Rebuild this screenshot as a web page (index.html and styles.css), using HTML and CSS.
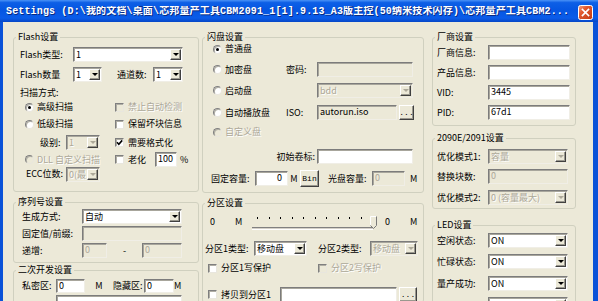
FILE: index.html
```html
<!DOCTYPE html>
<html lang="zh-CN">
<head>
<meta charset="utf-8">
<title>Settings</title>
<link rel="stylesheet" href="styles.css">
</head>
<body>
<div class="window">
  <div class="titlebar">
    <span class="title">Settings (D:\我的文档\桌面\芯邦量产工具CBM2091_1[1].9.13_A3版主控(50纳米技术闪存)\芯邦量产工具CBM2...</span>
    <svg class="close" width="15" height="15" viewBox="0 0 15 15">
      <defs>
        <linearGradient id="cg" x1="0" y1="0" x2="1" y2="1">
          <stop offset="0" stop-color="#f3a68a"/>
          <stop offset="0.35" stop-color="#e2592e"/>
          <stop offset="1" stop-color="#c13a12"/>
        </linearGradient>
      </defs>
      <rect x="0.5" y="0.5" width="14" height="14" rx="2" fill="url(#cg)" stroke="#ffffff"/>
      <path d="M4.5 4.5 L10.5 10.5 M10.5 4.5 L4.5 10.5" stroke="#ffffff" stroke-width="1.7" stroke-linecap="square"/>
    </svg>
  </div>
  <div class="client">
    <!-- left column -->
    <div class="col col1">
      <fieldset class="grp pb10">
        <legend>Flash设置</legend>
        <div class="row pl6 mt3">
          <span class="lbl w53">Flash类型:</span>
          <span class="combo w110"><span class="val">1</span><span class="drop"></span></span>
        </div>
        <div class="row pl6 mt5">
          <span class="lbl w53">Flash数量</span>
          <span class="combo w29"><span class="val">1</span><span class="drop"></span></span>
          <span class="lbl w36 ml15">通道数:</span>
          <span class="combo w30"><span class="val">1</span><span class="drop"></span></span>
        </div>
        <div class="row pl6 mt5 h12"><span class="lbl">扫描方式:</span></div>
        <div class="row pl6 mt1 h14">
          <span class="cell w95 pl5"><span class="radio on"></span>高级扫描</span>
          <span class="cell dis"><span class="check"></span>禁止自动检测</span>
        </div>
        <div class="row pl6 mt3 h14">
          <span class="cell w95 pl5"><span class="radio"></span>低级扫描</span>
          <span class="cell"><span class="check"></span>保留坏块信息</span>
        </div>
        <div class="row pl6 mt4">
          <span class="cell w95 pl20"><span class="lbl w26">级别:</span><span class="combo w34 off"><span class="val">1</span><span class="drop"></span></span></span>
          <span class="cell"><span class="check on"><svg viewBox="0 0 7 7" width="7" height="7"><path d="M1 3.3 L2.8 5.2 L6.2 1.4" stroke="#000" stroke-width="1.6" fill="none"/></svg></span>需要格式化</span>
        </div>
        <div class="row pl6 mt2">
          <span class="cell w95 pl5 dis"><span class="radio off"></span>DLL 自定义扫描</span>
          <span class="cell"><span class="check"></span><span class="lbl w18">老化</span><span class="edit w22 ml9">100</span><span class="lbl ml3">%</span></span>
        </div>
        <div class="row pl6 h14">
          <span class="cell w95 pl6"><span class="lbl w40">ECC位数:</span><span class="combo w34 off"><span class="val">0(最</span><span class="drop"></span></span></span>
        </div>
      </fieldset>

      <fieldset class="grp pb4 mt4">
        <legend>序列号设置</legend>
        <div class="row pl8">
          <span class="lbl w60">生成方式:</span>
          <span class="combo w100"><span class="val">自动</span><span class="drop"></span></span>
        </div>
        <div class="row pl8 mt2">
          <span class="lbl w60">固定值/前缀:</span>
          <span class="edit w100 off"></span>
        </div>
        <div class="row pl8 mt2">
          <span class="lbl w60">递增:</span>
          <span class="edit w25 off">0</span>
          <span class="lbl w35 center">-</span>
          <span class="edit w40 off">0</span>
        </div>
      </fieldset>

      <fieldset class="grp mt1">
        <legend>二次开发设置</legend>
        <div class="row pl8 mt2 h14">
          <span class="lbl w34">私密区:</span>
          <span class="edit w29 h14">0</span>
          <span class="lbl w28 center">M</span>
          <span class="lbl w31">隐藏区:</span>
          <span class="edit w30 h14">0</span>
          <span class="lbl w7 center">M</span>
        </div>
        <div class="row pl8 mt2">
          <span class="lbl w34"></span>
          <span class="edit w126"></span>
        </div>
      </fieldset>
    </div>

    <!-- middle column -->
    <div class="col col2">
      <fieldset class="grp pb5">
        <legend>闪盘设置</legend>
        <div class="row pl10 h10">
          <span class="cell w73"><span class="radio on"></span>普通盘</span>
        </div>
        <div class="row pl10 mt8">
          <span class="cell w73"><span class="radio"></span>加密盘</span>
          <span class="lbl w31">密码:</span>
          <span class="edit w96 off"></span>
        </div>
        <div class="row pl10 mt6">
          <span class="cell w73"><span class="radio"></span>启动盘</span>
          <span class="lbl w31"></span>
          <span class="combo w96 off"><span class="val">bdd</span><span class="drop"></span></span>
        </div>
        <div class="row pl10 mt7">
          <span class="cell w73"><span class="radio"></span>自动播放盘</span>
          <span class="lbl w31">ISO:</span>
          <span class="edit w80 ro">autorun.iso</span>
          <span class="btn w15 ml2">...</span>
        </div>
        <div class="row pl10 mt6 h12">
          <span class="cell w73 dis"><span class="radio off"></span>自定义盘</span>
        </div>
        <div class="row pl10 mt11">
          <span class="lbl w104 right">初始卷标:</span>
          <span class="edit w96"></span>
        </div>
        <div class="row pl8 mt6 h17">
          <span class="lbl w44">固定容量:</span>
          <span class="edit w33 right">0</span>
          <span class="lbl w12 center">M</span>
          <span class="btn w19">Bin</span>
          <span class="lbl w44 ml9">光盘容量:</span>
          <span class="edit w33 off">0</span>
          <span class="lbl ml5">M</span>
        </div>
      </fieldset>

      <fieldset class="grp mt4">
        <legend>分区设置</legend>
        <div class="row pl7 mt2 h18 top">
          <span class="lbl w25 pt4">0</span>
          <span class="lbl w17 pt4">M</span>
          <span class="slider">
            <span class="ticks"><i></i><i></i><i></i><i></i><i></i><i></i><i></i><i></i><i></i><i></i><i></i></span>
            <span class="track"></span>
            <svg class="thumb" width="7" height="13" viewBox="0 0 7 13">
              <path d="M0.5 9.5 L0.5 0.5 L6 0.5" stroke="#ffffff" fill="#ece9d8"/>
              <path d="M6.5 0.5 L6.5 9.5 L3.5 12.5 L0.5 9.5" stroke="#7a7a7a" fill="none"/>
            </svg>
          </span>
          <span class="lbl w25 ml8 pt4">0</span>
          <span class="lbl pt4">M</span>
        </div>
        <div class="row pl2 mt11">
          <span class="lbl w49">分区1类型:</span>
          <span class="combo w53"><span class="val">移动盘</span><span class="drop"></span></span>
          <span class="lbl w52 ml11">分区2类型:</span>
          <span class="combo w48 off"><span class="val">移动盘</span><span class="drop"></span></span>
        </div>
        <div class="row pl5 mt5 h14">
          <span class="cell w110"><span class="check"></span>分区1写保护</span>
          <span class="cell dis"><span class="check off"></span>分区2写保护</span>
        </div>
        <div class="row pl5 mt12">
          <span class="cell w72"><span class="check"></span>拷贝到分区1</span>
          <span class="edit w117"></span>
          <span class="btn w18 ml2">...</span>
        </div>
      </fieldset>
    </div>

    <!-- right column -->
    <div class="col col3">
      <fieldset class="grp pb5">
        <legend>厂商设置</legend>
        <div class="row pl4 mt1"><span class="lbl w51">厂商信息:</span><span class="edit w82"></span></div>
        <div class="row pl4 mt5"><span class="lbl w51">产品信息:</span><span class="edit w82"></span></div>
        <div class="row pl4 mt5"><span class="lbl w51">VID:</span><span class="edit w82">3445</span></div>
        <div class="row pl4 mt5"><span class="lbl w51">PID:</span><span class="edit w82">67d1</span></div>
      </fieldset>

      <fieldset class="grp pb3 mt6">
        <legend>2090E/2091设置</legend>
        <div class="row pl4 mt4"><span class="lbl w51">优化模式1:</span><span class="combo w80 off"><span class="val">容量</span><span class="drop"></span></span></div>
        <div class="row pl4 mt5"><span class="lbl w51">替换块数:</span><span class="edit w80 off">0</span></div>
        <div class="row pl4 mt6"><span class="lbl w51">优化模式2:</span><span class="combo w80 off"><span class="val">0 (容量最大)</span><span class="drop"></span></span></div>
      </fieldset>

      <fieldset class="grp mt10">
        <legend>LED设置</legend>
        <div class="row pl4 mt1"><span class="lbl w51">空闲状态:</span><span class="combo w80"><span class="val">ON</span><span class="drop"></span></span></div>
        <div class="row pl4 mt6"><span class="lbl w51">忙碌状态:</span><span class="combo w80"><span class="val">ON</span><span class="drop"></span></span></div>
        <div class="row pl4 mt7"><span class="lbl w51">量产成功:</span><span class="combo w80"><span class="val">ON</span><span class="drop"></span></span></div>
        <div class="row pl4 mt6"><span class="lbl w51"></span><span class="combo w80"><span class="val">ON</span><span class="drop"></span></span></div>
      </fieldset>
    </div>
  </div>
</div>
</body>
</html>
```

FILE: styles.css
```css
* { box-sizing: border-box; }
html, body { margin: 0; padding: 0; }
body {
  width: 598px;
  height: 301px;
  overflow: hidden;
  background: #0a52d8;
  font-family: "Noto Sans CJK SC", "Noto Sans", sans-serif;
  font-size: 9px;
  line-height: 12px;
  color: #000;
}
.window {
  width: 598px;
  height: 301px;
  display: flex;
  flex-direction: column;
  overflow: hidden;
}
.titlebar {
  flex: none;
  height: 22px;
  display: flex;
  align-items: center;
  padding: 2px 5px 0 6px;
  background: linear-gradient(#4a92f6 0%, #0d5fe6 12%, #0556e2 45%, #0a5ce9 82%, #0747c6 100%);
  color: #fff;
}
.title {
  flex: 1;
  overflow: hidden;
  white-space: nowrap;
  font-family: "Liberation Mono", "Noto Sans CJK SC", monospace;
  font-weight: bold;
  font-size: 10px;
  letter-spacing: 0.15px;
  text-shadow: 1px 1px 0 #0a2a80;
}
.close { flex: none; margin: 1px 0 0 6px; }

.client {
  flex: 1;
  display: flex;
  align-items: flex-start;
  background: #ece9d8;
  border-left: 3px solid #0a52d8;
  border-right: 5px solid #0a52d8;
  padding: 9px 0 0 10px;
}
.col { display: flex; flex-direction: column; flex: none; }
.col1 { width: 186px; }
.col2 { width: 222px; margin-left: 3px; }
.col3 { width: 144px; margin-left: 8px; }

.grp {
  margin: 0;
  padding: 0;
  min-width: 0;
  border: 1px solid #d0d0bf;
  border-radius: 3px;
}
.grp legend {
  margin-left: 2px;
  padding: 0 2px 2px;
  line-height: 11px;
  font-size: 9px;
}

.row { display: flex; align-items: center; height: 15px; white-space: nowrap; }
.row.top { align-items: flex-start; }
.cell { display: flex; align-items: center; height: 100%; flex: none; }
.lbl { flex: none; display: block; }
.right { text-align: right; padding-right: 2px; }
.center { text-align: center; }
.dis { color: #aca899; text-shadow: 1px 1px 0 #fff; }

/* edit boxes */
.edit {
  flex: none;
  display: block;
  height: 15px;
  padding: 0 2px;
  line-height: 12px;
  background: #fff;
  border: 1px solid;
  border-color: #7c7c7c #f0eee6 #f0eee6 #7c7c7c;
  box-shadow: inset 1px 1px 0 #a8a69c;
  overflow: hidden;
}
.edit.off { background: #ece9d8; color: #aca899; }
.edit.ro { background: #ece9d8; }
.edit.right { text-align: right; padding-right: 5px; }

/* combo boxes */
.combo {
  flex: none;
  display: flex;
  align-items: stretch;
  height: 15px;
  padding: 1px;
  background: #fff;
  border: 1px solid;
  border-color: #7c7c7c #f0eee6 #f0eee6 #7c7c7c;
  box-shadow: inset 1px 1px 0 #a8a69c;
  overflow: hidden;
}
.combo .val { flex: 1; padding-left: 1px; line-height: 11px; overflow: hidden; }
.combo .drop {
  flex: none;
  width: 11px;
  display: flex;
  align-items: center;
  justify-content: center;
  background: #ece9d8;
  border: 1px solid;
  border-color: #fff #404040 #404040 #fff;
  box-shadow: inset -1px -1px 0 #9a988e;
}
.combo .drop::after {
  content: "";
  border-left: 3px solid transparent;
  border-right: 3px solid transparent;
  border-top: 3px solid #000;
}
.combo.off { background: #ece9d8; }
.combo.off .val { color: #aca899; text-shadow: 1px 1px 0 #fff; }
.combo.off .drop::after { border-top-color: #aca899; }

/* push buttons */
.btn {
  flex: none;
  display: flex;
  align-items: center;
  justify-content: center;
  height: 15px;
  background: #ece9d8;
  border: 1px solid;
  border-color: #fff #404040 #404040 #fff;
  box-shadow: inset -1px -1px 0 #9a988e;
  font-family: "Liberation Mono", monospace;
  font-size: 8px;
  line-height: 10px;
}
.h17 .btn { height: 17px; }

/* radios and checks */
.radio {
  flex: none;
  width: 9px;
  height: 9px;
  margin-right: 3px;
  border-radius: 50%;
  background: #fff;
  border: 1px solid;
  border-color: #7f7f7f #e8e6de #e8e6de #7f7f7f;
  box-shadow: inset 1px 1px 0 #b0aea4;
  display: flex;
  align-items: center;
  justify-content: center;
}
.radio.on::after { content: ""; width: 3px; height: 3px; border-radius: 50%; background: #000; }
.radio.off { background: #ece9d8; }
.check {
  flex: none;
  width: 9px;
  height: 9px;
  margin-right: 4px;
  background: #fff;
  border: 1px solid;
  border-color: #7f7f7f #e8e6de #e8e6de #7f7f7f;
  box-shadow: inset 1px 1px 0 #b0aea4;
  display: flex;
  align-items: center;
  justify-content: center;
}
.dis .check, .check.off { background: #ece9d8; }
.check svg { display: block; }

/* slider */
.slider {
  flex: none;
  position: relative;
  width: 125px;
  height: 18px;
  display: flex;
  flex-direction: column;
}
.ticks {
  display: flex;
  justify-content: space-between;
  width: 116px;
  margin: 5px 0 0 5px;
  height: 2px;
}
.ticks i { display: block; width: 1px; height: 2px; background: #000; }
.track {
  display: block;
  width: 121px;
  height: 3px;
  margin-top: 8px;
  border-top: 1px solid #808080;
  border-bottom: 1px solid #fff;
  background: #d4d0c8;
}
.thumb { position: absolute; left: 118px; top: 4px; }

/* sizing helpers */
.h10 { height: 10px; }
.h12 { height: 12px; }
.h14 { height: 14px; }
.h17 { height: 17px; }
.h18 { height: 18px; }
.edit.h14 { height: 14px; }
.pt4 { padding-top: 4px; }
.pb3 { padding-bottom: 3px; }
.pb4 { padding-bottom: 4px; }
.pb5 { padding-bottom: 5px; }
.pb10 { padding-bottom: 10px; }
.pl2 { padding-left: 2px; }
.pl4 { padding-left: 4px; }
.pl5 { padding-left: 5px; }
.pl6 { padding-left: 6px; }
.pl7 { padding-left: 7px; }
.pl8 { padding-left: 8px; }
.pl10 { padding-left: 10px; }
.pl20 { padding-left: 20px; }
.mt1 { margin-top: 1px; }
.mt2 { margin-top: 2px; }
.mt3 { margin-top: 3px; }
.mt4 { margin-top: 4px; }
.mt5 { margin-top: 5px; }
.mt6 { margin-top: 6px; }
.mt7 { margin-top: 7px; }
.mt8 { margin-top: 8px; }
.mt10 { margin-top: 10px; }
.mt11 { margin-top: 11px; }
.mt12 { margin-top: 12px; }
.ml2 { margin-left: 2px; }
.ml3 { margin-left: 3px; }
.ml5 { margin-left: 5px; }
.ml8 { margin-left: 8px; }
.ml9 { margin-left: 9px; }
.ml11 { margin-left: 11px; }
.ml15 { margin-left: 15px; }
.w7 { width: 7px; }
.w12 { width: 12px; }
.w15 { width: 15px; }
.w17 { width: 17px; }
.w18 { width: 18px; }
.w19 { width: 19px; }
.w22 { width: 22px; }
.w25 { width: 25px; }
.w26 { width: 26px; }
.w28 { width: 28px; }
.w29 { width: 29px; }
.w30 { width: 30px; }
.w31 { width: 31px; }
.w33 { width: 33px; }
.w34 { width: 34px; }
.w35 { width: 35px; }
.w36 { width: 36px; }
.w40 { width: 40px; }
.w44 { width: 44px; }
.w48 { width: 48px; }
.w49 { width: 49px; }
.w51 { width: 51px; }
.w52 { width: 52px; }
.w53 { width: 53px; }
.w60 { width: 60px; }
.w72 { width: 72px; }
.w73 { width: 73px; }
.w80 { width: 80px; }
.w82 { width: 82px; }
.w95 { width: 95px; }
.w96 { width: 96px; }
.w100 { width: 100px; }
.w104 { width: 104px; }
.w110 { width: 110px; }
.w117 { width: 117px; }
.w126 { width: 126px; }
```
